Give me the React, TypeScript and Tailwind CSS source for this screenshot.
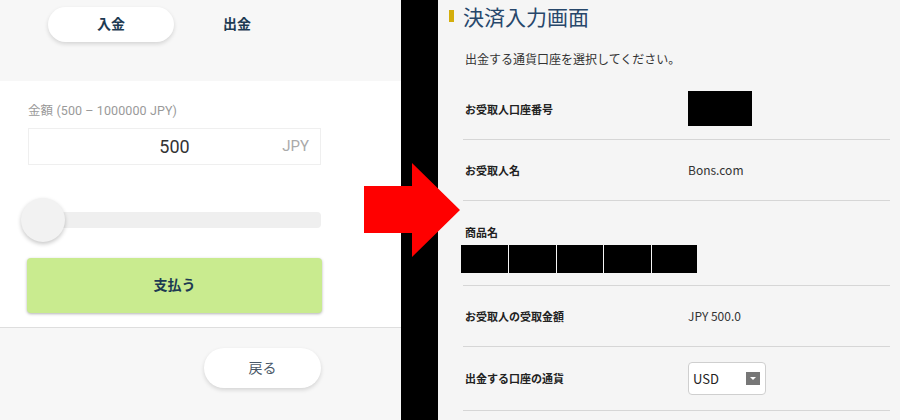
import React from 'react';

const jp = "font-['Roboto','Noto_Sans_CJK_JP',sans-serif]";
const jpR = "font-['Noto_Sans_CJK_JP',sans-serif]";

const Row: React.FC<{ label: string; h: string; children?: React.ReactNode }> = ({ label, h, children }) => (
  <div className={`flex items-center border-b border-[#d6d6d6] ${h}`}>
    <div className="w-[225px] text-[11px] font-bold text-[#222] pl-[2px]">{label}</div>
    <div className="text-[12px] text-[#333]">{children}</div>
  </div>
);

export default function App() {
  return (
    <div className="relative flex w-[900px] h-[420px] overflow-hidden bg-[#f7f7f7]">
      {/* left: deposit widget */}
      <div className={`w-[401px] flex flex-col bg-[#f7f7f7] ${jp}`}>
        <div className="h-[81px] flex pl-[48px] pt-[7px]">
          <div className="w-[126px] h-[35px] rounded-full bg-white shadow-[0_2px_4px_rgba(0,0,0,0.14)] flex items-center justify-center text-[14px] font-bold text-[#1d3a52]">
            入金
          </div>
          <div className="w-[126px] h-[35px] flex items-center justify-center text-[14px] font-bold text-[#1d3a52]">
            出金
          </div>
        </div>

        <div className="h-[247px] bg-white border-b border-[#dedede] px-[28px] pt-[101px] relative">
          <div className="absolute left-[28px] top-[21px] text-[12.5px] leading-[18px] text-[#9a9a9a] tracking-[0.1px]">
            金額 (500 – 1000000 JPY)
          </div>
          <div className="absolute left-[28px] top-[47px] w-[293px] h-[37px] border border-[#efefef] flex items-center justify-center">
            <span className="text-[18px] text-[#333]">500</span>
            <span className="absolute right-[11px] text-[15px] text-[#aaa]">JPY</span>
          </div>
          <div className="absolute left-[28px] top-[131px] w-[293px] h-[16px] rounded-sm bg-[#efefef]" />
          <div className="absolute left-[21px] top-[117px] w-[44px] h-[44px] rounded-full bg-[#f2f2f2] shadow-[0_2px_4px_rgba(0,0,0,0.22)]" />
          <div className="absolute left-[27px] top-[177px] w-[295px] h-[55px] rounded bg-[#c9eb8f] shadow-[0_1px_3px_rgba(0,0,0,0.3)] flex items-center justify-center text-[14px] font-bold text-[#1d3a52]">
            支払う
          </div>
        </div>

        <div className="pt-[20px] pl-[204px]">
          <div className="w-[117px] h-[40px] rounded-full bg-white shadow-[0_2px_4px_rgba(0,0,0,0.14)] flex items-center justify-center text-[14px] text-[#4a5868]">
            戻る
          </div>
        </div>
      </div>

      {/* separator strip */}
      <div className="w-[37px] bg-black" />

      {/* right: payment form */}
      <div className={`flex-1 bg-[#f5f5f5] ${jpR}`}>
        <div className="flex items-center h-[32px] pl-[11px]">
          <div className="w-[5px] h-[12px] bg-[#d4ae0c]" />
          <div className="ml-[9px] text-[21px] leading-[24px] text-[#27476b]">決済入力画面</div>
        </div>
        <div className="pl-[25px] pr-[10px]">
          <div className="h-[48px] flex items-center text-[12px] text-[#333] pl-[2px] pt-[5px]">
            出金する通貨口座を選択してください。
          </div>
          <Row label="お受取人口座番号" h="h-[60px]">
            <div className="w-[64px] h-[35px] bg-black mt-[-2px]" />
          </Row>
          <Row label="お受取人名" h="h-[61px]">
            Bons.com
          </Row>
          <div className="h-[85px] border-b border-[#d6d6d6] flex flex-col pt-[23px]">
            <div className="text-[11px] font-bold text-[#222] pl-[2px] leading-[16px]">商品名</div>
            <div className="flex gap-px ml-[-2px] mt-[5px]">
              <div className="w-[47px] h-[28px] bg-black" />
              <div className="w-[47px] h-[28px] bg-black" />
              <div className="w-[46px] h-[28px] bg-black" />
              <div className="w-[47px] h-[28px] bg-black" />
              <div className="w-[45px] h-[28px] bg-black" />
            </div>
          </div>
          <Row label="お受取人の受取金額" h="h-[61px]">
            JPY 500.0
          </Row>
          <Row label="出金する口座の通貨" h="h-[64px]">
            <div className="w-[78px] h-[33px] bg-white border border-[#cfcfcf] rounded-sm flex items-center justify-between pl-[4px] pr-[5px] text-[13px] text-[#222]">
              USD
              <div className="w-[14px] h-[13px] bg-[#777] flex items-center justify-center">
                <div className="w-0 h-0 border-l-[3px] border-r-[3px] border-t-[3px] border-l-transparent border-r-transparent border-t-white" />
              </div>
            </div>
          </Row>
        </div>
      </div>

      {/* red arrow overlay */}
      <svg className="absolute left-[364px] top-[163px]" width="96" height="94" viewBox="0 0 96 94">
        <polygon points="0,23 48,23 48,0 96,47 48,94 48,70 0,70" fill="#ff0000" />
      </svg>
    </div>
  );
}
